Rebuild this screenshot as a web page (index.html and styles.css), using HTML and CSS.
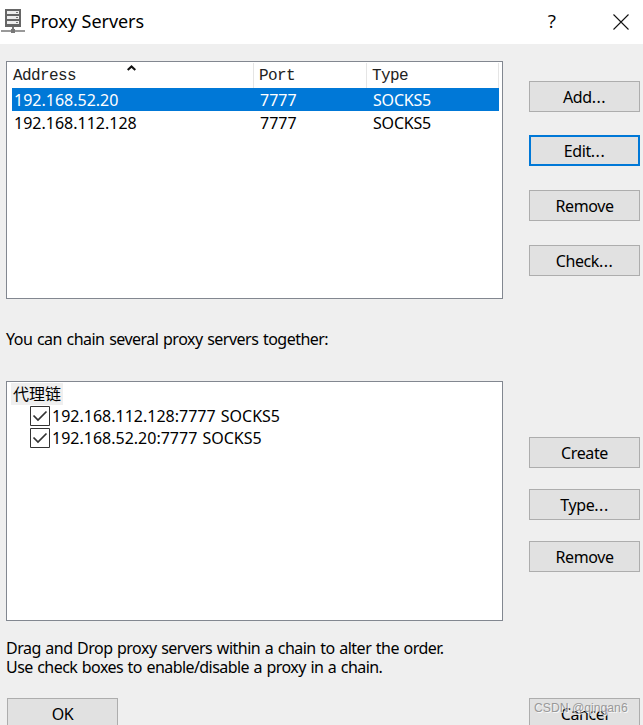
FILE: index.html
```html
<!DOCTYPE html>
<html lang="en">
<head>
<meta charset="utf-8">
<title>Proxy Servers</title>
<link rel="stylesheet" href="styles.css">
</head>
<body>
<div class="dialog">
  <header class="titlebar">
    <svg class="app-icon" width="24" height="24" viewBox="0 0 24 24" shape-rendering="crispEdges">
      <path fill="#666" d="M4 0h16v18H4z"/>
      <path fill="#eee" d="M6 2h12v3H6zM6 7h12v3H6zM6 12h12v3H6z"/>
      <path fill="#777" d="M15 3h2v1h-2zM15 8h2v1h-2zM15 13h2v1h-2z"/>
      <path fill="#999" d="M0 21h24v2H0z"/>
      <path fill="#777" d="M11 18h2v3h-2zM10 20h4v4h-4z"/>
    </svg>
    <h1 class="title">Proxy Servers</h1>
    <span class="help">?</span>
    <svg class="close" width="16" height="16" viewBox="0 0 16 16"><path d="M.5.5l15 15M15.5.5l-15 15" stroke="#111" stroke-width="1.1"/></svg>
  </header>
  <main class="content">
    <section class="left">
      <div class="server-list">
        <div class="row head">
          <span class="cell">Address<svg class="sort" width="9" height="6" viewBox="0 0 9 6"><path d="M.7 5L4.5 1.4 8.3 5" fill="none" stroke="#111" stroke-width="2"/></svg></span>
          <span class="cell">Port</span>
          <span class="cell">Type</span>
        </div>
        <div class="row selected"><span>192.168.52.20</span><span>7777</span><span class="type">SOCKS5</span></div>
        <div class="row"><span>192.168.112.128</span><span>7777</span><span class="type">SOCKS5</span></div>
      </div>
      <p class="chain-label">You can chain several proxy servers together:</p>
      <div class="chain-list">
        <span class="chain-name">代理链</span>
        <div class="chain-item"><svg class="check" width="20" height="20" viewBox="0 0 20 20"><path d="M.5.5h19v19H.5z" fill="#fff" stroke="#333"/><path d="M3.500 9.500l4.500 4.500 8.500-8.500" fill="none" stroke="#333" stroke-width="1.7"/></svg><span>192.168.112.128:7777 SOCKS5</span></div>
        <div class="chain-item"><svg class="check" width="20" height="20" viewBox="0 0 20 20"><path d="M.5.5h19v19H.5z" fill="#fff" stroke="#333"/><path d="M3.500 9.500l4.500 4.500 8.500-8.500" fill="none" stroke="#333" stroke-width="1.7"/></svg><span>192.168.52.20:7777 SOCKS5</span></div>
      </div>
      <p class="hint"><span class="hint-drag">Drag and Drop proxy servers within a chain to alter the order.</span><br><span class="hint-use">Use check boxes to enable/disable a proxy in a chain.</span></p>
      <button class="btn ok">OK</button>
    </section>
    <aside class="right">
      <div class="group servers">
        <button class="btn">Add<span class="dots">...</span></button>
        <button class="btn focused">Edit<span class="dots">...</span></button>
        <button class="btn">Remove</button>
        <button class="btn">Check<span class="dots">...</span></button>
      </div>
      <div class="group chains">
        <button class="btn">Create</button>
        <button class="btn">Type<span class="dots">...</span></button>
        <button class="btn">Remove</button>
      </div>
      <div class="cancel-wrap">
        <button class="btn">Cancel</button>
        <span class="watermark">CSDN @qingan6</span>
      </div>
    </aside>
  </main>
</div>
</body>
</html>
```
FILE: styles.css
```css
* { box-sizing: border-box; }
html, body { margin: 0; height: 100%; overflow: hidden; }
body { background: #efefef; color: #000; font: 16px/19px "Noto Sans", "Noto Sans CJK SC", sans-serif; }
.dialog { width: 643px; height: 725px; overflow: hidden; }
.titlebar { display: flex; align-items: center; height: 44px; padding: 0 14px 0 1px; background: #fff; }
.app-icon { margin-top: -3px; }
.title { margin: -2px auto 0 5px; font-size: 18px; font-weight: 400; line-height: 24px; letter-spacing: -.05px; }
.help { margin: -2px 57px 0 0; font-family: "Open Sans", sans-serif; font-size: 19px; font-weight: 400; }
.content { display: flex; justify-content: space-between; padding: 17px 3px 0 6px; }
.left { width: 497px; }
.server-list, .chain-list { background: #fff; border: 1px solid #828790; }
.server-list { height: 238px; padding: 1px 3px 0 5px; }
.row { display: grid; grid-template-columns: 246px 113px 1fr; height: 23px; line-height: 25px; }
.row > span { padding-left: 2px; }
.head { height: 25px; line-height: 26px; font-family: "Liberation Mono", monospace; font-size: 16px; letter-spacing: -.6px; color: #222; }
.head .cell { position: relative; height: 25px; border-right: 1px solid #e5e5e5; padding-left: 1px; }
.head .cell:nth-child(1) { width: 242px; }
.head .cell:nth-child(2) { width: 113px; margin-left: -4px; padding-left: 5px; }
.head .cell:nth-child(3) { margin-left: -4px; padding-left: 5px; }
.sort { position: absolute; left: 115px; top: 2px; }
.selected { background: #0078d7; color: #fff; }
.type { letter-spacing: -.2px; }
.chain-label { margin: 31px 0 32px; letter-spacing: -.52px; word-spacing: 1px; }
.chain-list { height: 240px; padding: 1px 0 0 4px; }
.chain-name { display: block; width: 52px; height: 22px; padding-left: 2px; line-height: 20px; background: #efefef; font-family: "Noto Sans CJK SC", sans-serif; font-weight: 400; }
.chain-item { display: flex; align-items: center; gap: 2px; height: 22px; margin-left: 19px; word-spacing: 1px; }
.hint { margin: 18px 0 21px; letter-spacing: -.51px; word-spacing: .9px; }
.hint-use { letter-spacing: -.57px; word-spacing: 1px; }
.btn { display: block; width: 111px; height: 31px; padding: 1px 0 0; border: 1px solid #adadad; border-radius: 0; background: #e1e1e1; color: #000; font: inherit; line-height: 29px; letter-spacing: -.4px; }
.dots { letter-spacing: .5px; }
.focused { border: 2px solid #0078d7; line-height: 27px; }
.ok { margin-left: 1px; }
.right { width: 111px; padding-top: 20px; }
.group { display: grid; }
.servers { grid-template-rows: 54px 55px 55px 31px; }
.chains { grid-template-rows: 52px 52px 31px; margin: 161px 0 126px; }
.cancel-wrap { position: relative; }
.watermark { position: absolute; left: 5px; top: 1px; font: 12.200px/19px "Liberation Sans", sans-serif; white-space: nowrap; color: #999; text-shadow: 1px 1px 0 #f8f8f8; }
```
